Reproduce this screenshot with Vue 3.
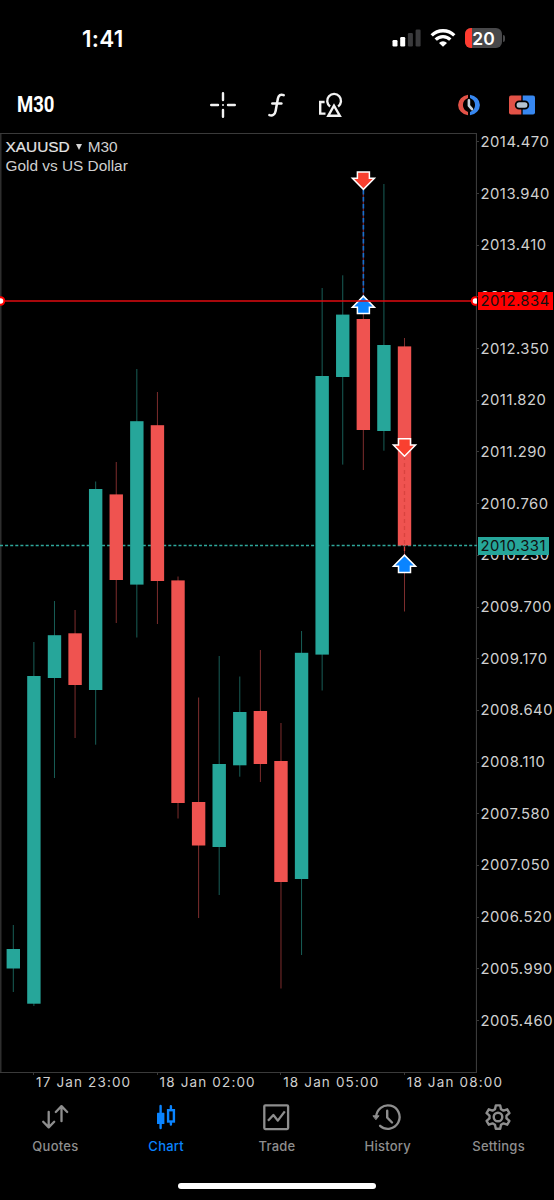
<template>
  <div class="app">
    <header class="status-bar">
      <div class="clock">1:41</div>
      <div class="status-icons">
        <svg class="signal" width="29" height="18" viewBox="0 0 29 18">
          <rect x="0.5" y="11" width="5" height="6.5" rx="1.2" fill="#fff" />
          <rect x="8.2" y="8" width="5" height="9.5" rx="1.2" fill="#fff" />
          <rect x="15.9" y="4" width="5" height="13.5" rx="1.2" fill="#3a3a3c" />
          <rect x="23.6" y="0.5" width="5" height="17" rx="1.2" fill="#3a3a3c" />
        </svg>
        <svg class="wifi" width="26" height="18" viewBox="0 0 26 18" fill="none" stroke="#fff" stroke-width="3.3">
          <path d="M1.7 6.4A16 16 0 0 1 24.3 6.4" />
          <path d="M5.7 10.7A10.3 10.3 0 0 1 20.3 10.7" />
          <path d="M9 13.9A5.6 5.6 0 0 1 17 13.9L13 17.8Z" fill="#fff" stroke="none" />
        </svg>
        <div class="battery">
          <div class="battery-body">
            <div class="battery-level"></div>
            <span>20</span>
          </div>
          <div class="battery-cap"></div>
        </div>
      </div>
    </header>

    <nav class="toolbar">
      <div class="period">M30</div>
      <div class="tools">
        <svg width="28" height="28" viewBox="0 0 28 28" stroke="#f2f2f2" stroke-width="2.4" stroke-linecap="round">
          <path d="M14 2.2V9M14 19V25.8M2.2 14H9M19 14H25.8" />
          <path d="M14 14h.01" stroke-width="2" />
        </svg>
        <svg width="28" height="28" viewBox="0 0 28 28" fill="none" stroke="#f2f2f2" stroke-width="2.5" stroke-linecap="round">
          <path d="M20.7 4.2C17.7 2.9 15.5 4.3 14.9 7.5L12.6 19.9C11.9 23.6 9.6 25.1 6.4 24.1" />
          <path d="M9.3 12.4H18.4" />
        </svg>
        <svg width="28" height="28" viewBox="0 0 28 28" fill="none" stroke="#f2f2f2" stroke-width="2.4">
          <path d="M13.1 15.4A6.9 6.9 0 1 1 21.1 15.4" />
          <path d="M17 14.6L11.3 24.7H22.8Z" />
          <path d="M7.6 11H3.2V22.6H8.5" />
        </svg>
      </div>
      <div class="modes">
        <svg width="28" height="24" viewBox="0 0 28 24">
          <path d="M13 1.7A12.3 10.5 0 0 0 13 22.3V19A8.3 7.6 0 0 1 13 5Z" fill="#e25247" />
          <path d="M15 1.7A12.3 10.5 0 0 1 15 22.3V19A8.3 7.6 0 0 0 15 5Z" fill="#3787f0" />
          <path d="M13.9 7.4V12.6L17 16.2" fill="none" stroke="#c6d2dc" stroke-width="2.6" stroke-linecap="round" stroke-linejoin="round" />
        </svg>
        <svg width="28" height="24" viewBox="0 0 28 24">
          <path d="M3 2.5H13.3V21.5H3Q1 21.5 1 19.5V4.5Q1 2.5 3 2.5Z" fill="#e25247" />
          <path d="M14.7 2.5H25Q27 2.5 27 4.5V19.5Q27 21.5 25 21.5H14.7Z" fill="#3787f0" />
          <rect x="7.7" y="8.3" width="12.6" height="7.4" rx="3.4" fill="#b4c3d0" stroke="#000" stroke-width="1.8" />
        </svg>
      </div>
    </nav>

    <main class="chart">
      <div class="plot">
        <svg width="477" height="940" viewBox="0 133 477 940">
          <path d="M0 133.5H476.5V1072.5H0" class="frame" />
          <path d="M.8 133V1072" class="frame" />
          <path d="M0 545.5H477" class="bid-line" />
          <g v-for="(c, i) in candles" :key="i" :class="c[0]">
            <path :d="`M${candleX(i)} ${c[1]}V${c[4]}`" class="wick" />
            <rect :x="candleX(i) - 6.7" :y="c[2]" width="13.4" :height="c[3] - c[2]" />
          </g>
          <path d="M363.4 189V298" class="deal-back" />
          <path d="M363.4 190V298" class="deal" />
          <path d="M404.5 456V555" class="deal-loss" />
          <path
            v-for="(m, i) in markers"
            :key="'m' + i"
            :d="m.up ? arrowUp : arrowDown"
            :transform="`translate(${m.x} ${m.y})`"
            :fill="m.up ? '#0a84ff' : '#f9402f'"
            stroke="#fff"
            stroke-width="1.5"
          />
          <path d="M0 301H477" class="ask-line" />
          <circle v-for="x in [0.5, 475.5]" :key="x" :cx="x" cy="301" r="3.8" fill="#fff" stroke="#f00" stroke-width="2" />
        </svg>
        <div class="caption">
          <div><span class="symbol">XAUUSD</span><span class="caret"></span>M30</div>
          <div>Gold vs US Dollar</div>
        </div>
      </div>
      <div class="prices">
        <div v-for="p in prices" :key="p" class="price">{{ p }}</div>
        <div class="tag ask">2012.834</div>
        <div class="tag bid">2010.331</div>
      </div>
    </main>

    <div class="times">
      <div v-for="t in times" :key="t" class="time">{{ t }}</div>
    </div>

    <footer class="tabs">
      <div class="tab">
        <svg width="30" height="30" viewBox="0 0 30 30" fill="none" stroke="currentColor" stroke-width="2.3" stroke-linecap="round" stroke-linejoin="round">
          <path d="M8.7 9.8V25M3.2 19.8L8.7 25.4L14.2 19.8" />
          <path d="M21.5 19.2V4.4M15.8 10L21.5 4.1L27.2 10" />
        </svg>
        <span>Quotes</span>
      </div>
      <div class="tab active">
        <svg width="30" height="30" viewBox="0 0 30 30" fill="none" stroke="currentColor" stroke-width="2.4" stroke-linecap="round">
          <path d="M9.6 4V26M19.9 4.2V7.5M19.9 20.5V22.6" />
          <rect x="6" y="10.8" width="7.4" height="11.2" rx=".6" fill="currentColor" stroke="none" />
          <rect x="17.1" y="8.2" width="5.8" height="11.3" />
        </svg>
        <span>Chart</span>
      </div>
      <div class="tab">
        <svg width="30" height="30" viewBox="0 0 30 30" fill="none" stroke="currentColor" stroke-width="2.3" stroke-linejoin="round">
          <rect x="3.3" y="3.3" width="23.8" height="23.8" rx="1" />
          <path d="M7 18.8L12.4 13L16.8 18.6L23.8 9.4" />
        </svg>
        <span>Trade</span>
      </div>
      <div class="tab">
        <svg width="30" height="30" viewBox="0 0 30 30" fill="none" stroke="currentColor" stroke-width="2.3" stroke-linecap="round">
          <path d="M4.2 15A11.7 11.7 0 1 1 8.1 23.8" />
          <path d="M1.3 13.8H7.1L4.1 17.4Z" fill="currentColor" stroke-width="1" />
          <path d="M15.2 8.8V15.6L20 20.5" stroke-width="2.4" />
        </svg>
        <span>History</span>
      </div>
      <div class="tab">
        <svg width="30" height="30" viewBox="0 0 30 30" fill="none" stroke="currentColor" stroke-width="2.4" stroke-linejoin="round">
          <path d="M12.8 3.4H17.2L18 7.2L20.5 8.6L24.2 7.3L26.4 11.1L23.5 13.7V16.4L26.4 18.9L24.2 22.7L20.5 21.4L18 22.8L17.2 26.7H12.8L12 22.8L9.5 21.4L5.8 22.7L3.6 18.9L6.5 16.4V13.7L3.6 11.1L5.8 7.3L9.5 8.6L12 7.2Z" />
          <circle cx="15" cy="15" r="4.3" />
        </svg>
        <span>Settings</span>
      </div>
    </footer>
    <div class="home-indicator"></div>
  </div>
</template>

<script setup>
// direction, high, body top, body bottom, low
const candles = [
  ['up', 925, 949, 968.5, 992],
  ['up', 642, 676, 1003.7, 1006],
  ['up', 601, 635.2, 678, 778],
  ['down', 610, 633.3, 685, 738],
  ['up', 481.5, 489, 690, 744.7],
  ['down', 462, 494.4, 580, 623],
  ['up', 369, 421.2, 584.6, 637.5],
  ['down', 392, 425.2, 581, 624],
  ['down', 576.5, 580.4, 803, 818.5],
  ['down', 697.5, 802, 845.5, 918],
  ['up', 656, 764, 847, 895],
  ['up', 676.5, 712, 765.3, 776.7],
  ['down', 650, 711, 764, 782],
  ['down', 723, 761, 882, 988.5],
  ['up', 631, 652.8, 879, 955],
  ['up', 288, 376, 654.6, 690.5],
  ['up', 275.3, 314.6, 377, 464.6],
  ['down', 180, 319, 430, 470],
  ['up', 184, 345, 431, 450.7],
  ['down', 338, 346.4, 545.5, 611.5]
]

const candleX = (i) => Number((13.3 + i * 20.59).toFixed(2))

const arrowDown = 'M-6 -8.3H6V-1.9H11L0 9.2L-11 -1.9H-6Z'
const arrowUp = 'M-6 8.6H6V2.2H11L0 -8.9L-11 2.2H-6Z'

const markers = [
  { x: 363.4, y: 180.2, up: false },
  { x: 363.4, y: 305, up: true },
  { x: 404.5, y: 447, up: false },
  { x: 404.5, y: 564, up: true }
]

const prices = Array.from({ length: 18 }, (_, i) => (2014.47 - i * 0.53).toFixed(3))
const times = ['17 Jan 23:00', '18 Jan 02:00', '18 Jan 05:00', '18 Jan 08:00']
</script>

<style>
body {
  background: #000;
}
</style>

<style scoped>
.app {
  width: 554px;
  height: 1200px;
  display: flex;
  flex-direction: column;
  overflow: hidden;
  background: #000;
  color: #d0d0d0;
  font-family: Inter, "Liberation Sans", sans-serif;
}

svg {
  display: block;
  flex-shrink: 0;
}

.status-bar {
  height: 76px;
  flex-shrink: 0;
  box-sizing: border-box;
  padding: 0 49px 0 82px;
  display: flex;
  align-items: center;
  justify-content: space-between;
  color: #fff;
}

.clock {
  font-size: 22.5px;
  font-weight: 600;
  letter-spacing: 0.3px;
}

.status-icons {
  display: flex;
  align-items: center;
}

.wifi {
  margin: 0 9px 0 9px;
}

.battery {
  display: flex;
  align-items: center;
  gap: 1px;
}

.battery-body {
  width: 37px;
  height: 20px;
  border-radius: 6px;
  background: #48484a;
  position: relative;
  overflow: hidden;
  display: flex;
  align-items: center;
  justify-content: center;
  font-size: 17.5px;
  font-weight: 600;
}

.battery-body span {
  position: relative;
}

.battery-level {
  position: absolute;
  left: 0;
  top: 0;
  width: 20%;
  height: 100%;
  background: #ff3b30;
}

.battery-cap {
  width: 2px;
  height: 7px;
  border-radius: 0 2px 2px 0;
  background: #48484a;
}

.toolbar {
  height: 57px;
  flex-shrink: 0;
  box-sizing: border-box;
  padding: 0 18px 0 17px;
  display: grid;
  grid-template-columns: 192px 1fr auto;
  align-items: center;
}

.period {
  font-family: Roboto, sans-serif;
  font-size: 21.5px;
  font-weight: 700;
  color: #fff;
  transform: scaleX(0.86);
  transform-origin: left;
}

.tools {
  display: flex;
  gap: 26px;
}

.modes {
  display: flex;
  gap: 25px;
}

.chart {
  height: 940px;
  flex-shrink: 0;
  display: flex;
}

.plot {
  width: 477px;
  position: relative;
}

.caption {
  position: absolute;
  left: 5.5px;
  top: 4px;
  font-family: "Liberation Sans", sans-serif;
  font-size: 15.4px;
  line-height: 19.3px;
}

.symbol {
  color: #e6e6e6;
  -webkit-text-stroke: 0.2px #e6e6e6;
}

.caret {
  display: inline-block;
  margin: 0 6px 2px 6px;
  border: 3px solid transparent;
  border-top: 6px solid #d6d6d6;
  border-bottom: 0;
}

.frame {
  fill: none;
  stroke: #3a3a3a;
  stroke-width: 1.2;
}

.up {
  fill: #26a69a;
  stroke: #185e57;
}

.down {
  fill: #ef5350;
  stroke: #7d2d2d;
}

.up rect,
.down rect {
  stroke: none;
}

.wick {
  stroke-width: 1;
}

.bid-line {
  stroke: #2fa89c;
  stroke-width: 1.4;
  stroke-dasharray: 3 2.1;
}

.ask-line {
  stroke: #e00b10;
  stroke-width: 1.5;
}

.deal-back {
  stroke: #6b2230;
  stroke-width: 1;
}

.deal {
  stroke: #1670cf;
  stroke-width: 1.6;
  stroke-dasharray: 4.5 2.5;
}

.deal-loss {
  stroke: #d9433f;
  stroke-width: 1.3;
  stroke-dasharray: 4 3;
}

.prices {
  flex: 1;
  position: relative;
  margin-top: -17px;
}

.price {
  height: 51.7px;
  padding-left: 3.5px;
  position: relative;
  display: flex;
  align-items: center;
  font-size: 14.8px;
  letter-spacing: 0.5px;
  white-space: nowrap;
}

.price::before {
  content: '';
  position: absolute;
  left: 0;
  width: 2px;
  height: 1px;
  background: #3a3a3a;
}

.tag {
  position: absolute;
  left: 1px;
  width: 75px;
  height: 18px;
  box-sizing: border-box;
  padding-left: 2.5px;
  font-size: 14.8px;
  letter-spacing: 0.5px;
  line-height: 18px;
  color: #111;
}

.ask {
  top: 176px;
  background: #f00;
}

.bid {
  top: 420.5px;
  width: 71px;
  background: #26a69a;
}

.times {
  height: 25px;
  flex-shrink: 0;
  padding-left: 33px;
  display: flex;
}

.time {
  width: 123.6px;
  flex-shrink: 0;
  box-sizing: border-box;
  padding-left: 3px;
  position: relative;
  font-size: 13.5px;
  line-height: 19px;
  letter-spacing: 1.15px;
  white-space: nowrap;
}

.time::before {
  content: '';
  position: absolute;
  left: 0;
  top: 0;
  width: 1px;
  height: 2px;
  background: #3a3a3a;
}

.tabs {
  height: 81px;
  flex-shrink: 0;
  display: grid;
  grid-template-columns: repeat(5, 1fr);
}

.tab {
  padding-top: 4px;
  display: flex;
  flex-direction: column;
  align-items: center;
  gap: 6px;
  font-size: 13px;
  font-weight: 500;
  line-height: 16px;
  letter-spacing: 0.25px;
  color: #8e8e8e;
}

.tab svg {
  margin-left: -1px;
}

.active {
  color: #0a84ff;
}

.home-indicator {
  width: 198px;
  height: 6px;
  flex-shrink: 0;
  margin: 4px auto 0;
  border-radius: 3px;
  background: #fff;
}
</style>
